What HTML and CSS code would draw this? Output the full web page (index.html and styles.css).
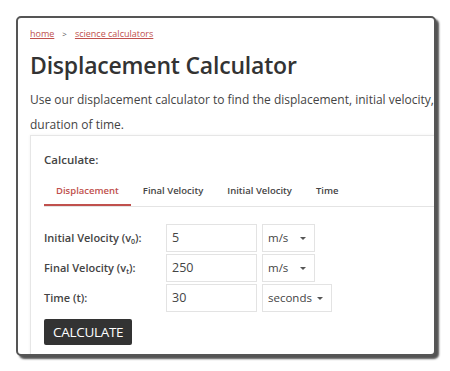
FILE: index.html
```html
<!DOCTYPE html>
<html lang="en">
<head>
    <meta charset="UTF-8">
    <meta name="viewport" content="width=device-width, initial-scale=1.0">
    <title>Displacement Calculator</title>
    <link rel="stylesheet" href="styles.css">
</head>
<body>
    <div class="card">
        <div class="content">
            <nav class="crumbs">
                <a href="#">home</a>
                <span class="sep">&gt;</span>
                <a href="#">science calculators</a>
            </nav>

            <h1>Displacement Calculator</h1>

            <p class="intro">Use our displacement calculator to find the displacement, initial velocity, final velocity, or acceleration over a<br>duration of time.</p>

            <div class="calc">
                <div class="calc-title">Calculate:</div>

                <ul class="tabs">
                    <li class="active">Displacement</li>
                    <li>Final Velocity</li>
                    <li>Initial Velocity</li>
                    <li>Time</li>
                </ul>

                <div class="fields">
                    <div class="row">
                        <label>Initial Velocity (v<sub>0</sub>):</label>
                        <input type="text" value="5">
                        <span class="select">m/s</span>
                    </div>
                    <div class="row">
                        <label>Final Velocity (v<sub>t</sub>):</label>
                        <input type="text" value="250">
                        <span class="select">m/s</span>
                    </div>
                    <div class="row">
                        <label>Time (t):</label>
                        <input type="text" value="30">
                        <span class="select">seconds</span>
                    </div>
                </div>

                <button class="btn">CALCULATE</button>
            </div>
        </div>
    </div>
</body>
</html>
```

FILE: styles.css
```css
* {
    margin: 0;
    padding: 0;
    box-sizing: border-box;
}

body {
    font-family: 'Open Sans', 'Noto Sans', sans-serif;
    background: #fff;
    color: #444;
    padding: 16px;
}

.card {
    width: 420px;
    height: 340px;
    border: 2px solid #555;
    border-radius: 5px;
    box-shadow: 3px 3px 2px rgba(40, 40, 40, 0.8);
    background: #fff;
    overflow: hidden;
}

.content {
    width: 640px;
    padding: 8px 0 0 12px;
}

.crumbs {
    font-size: 9px;
    height: 14px;
    display: flex;
    align-items: center;
}

.crumbs a {
    color: #c0504d;
    text-decoration: underline;
}

.crumbs .sep {
    color: #555;
    margin: 0 8px;
    font-size: 8px;
}

h1 {
    font-size: 23px;
    font-weight: 600;
    color: #333;
    letter-spacing: -0.2px;
    margin-top: 9px;
    line-height: 32px;
}

.intro {
    font-size: 12px;
    line-height: 25px;
    margin-top: 6px;
    color: #444;
}

.calc {
    margin-top: -2px;
    border: 1px solid #e6e6e6;
    box-shadow: 0 0 3px rgba(0, 0, 0, 0.06);
    padding: 14px 0 20px 13px;
    height: 240px;
}

.calc-title {
    font-size: 11.5px;
    font-weight: 600;
    color: #444;
    line-height: 20px;
}

.tabs {
    list-style: none;
    display: flex;
    margin-top: 7px;
    border-bottom: 1px solid #e4e4e4;
}

.tabs li {
    font-size: 9.5px;
    font-weight: 600;
    color: #444;
    padding: 0 12px;
    line-height: 27px;
    border-bottom: 2px solid transparent;
}

.tabs li.active {
    color: #c0504d;
    border-bottom-color: #c0504d;
}

.fields {
    margin-top: 16px;
    display: flex;
    flex-direction: column;
    gap: 1px;
}

.row {
    display: flex;
    align-items: center;
    height: 29px;
}

.row label {
    width: 122px;
    font-size: 11px;
    font-weight: 600;
    color: #444;
}

.row label sub {
    font-size: 7px;
    vertical-align: -2px;
}

.row input {
    width: 91px;
    height: 28px;
    border: 1px solid #e3e3e3;
    font-family: inherit;
    font-size: 12.5px;
    color: #444;
    padding: 0 5px;
    outline: none;
}

.select {
    margin-left: 5px;
    min-width: 53px;
    height: 28px;
    border: 1px solid #e3e3e3;
    font-size: 11.5px;
    color: #444;
    padding: 0 19px 0 5px;
    display: flex;
    align-items: center;
    position: relative;
}

.select::after {
    content: '';
    position: absolute;
    right: 8px;
    top: 12px;
    border-left: 3px solid transparent;
    border-right: 3px solid transparent;
    border-top: 3px solid #555;
}

.btn {
    margin-top: 7px;
    background: #333;
    color: #fff;
    border: none;
    border-radius: 2px;
    font-family: inherit;
    font-size: 13.5px;
    padding: 0 9px;
    height: 26px;
    letter-spacing: -0.3px;
}
```
